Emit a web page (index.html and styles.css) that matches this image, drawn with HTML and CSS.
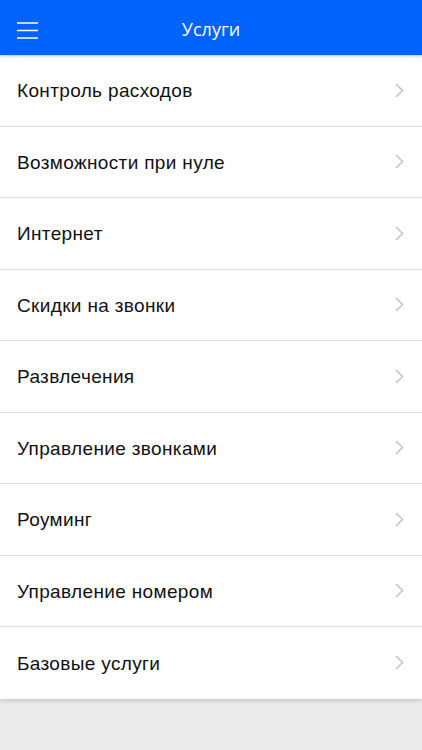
FILE: index.html
```html
<!DOCTYPE html>
<html lang="ru">
<head>
<meta charset="utf-8">
<title>Услуги</title>
<link rel="stylesheet" href="styles.css">
</head>
<body>
<header class="topbar">
  <button class="menu-btn" aria-label="Меню">
    <svg width="22" height="17" viewBox="0 0 22 17"><g stroke="#fff" stroke-width="1.5"><line x1="0" y1="1" x2="21" y2="1"/><line x1="0" y1="8.5" x2="21" y2="8.5"/><line x1="0" y1="16" x2="21" y2="16"/></g></svg>
  </button>
  <h1 class="title">Услуги</h1>
</header>
<ul class="list">
  <li class="item"><span>Контроль расходов</span><svg class="chev" width="9" height="15" viewBox="0 0 9 15"><path d="M1 1l6.5 6.5L1 14" fill="none" stroke="#c4c4c8" stroke-width="1.6"/></svg></li>
  <li class="item"><span>Возможности при нуле</span><svg class="chev" width="9" height="15" viewBox="0 0 9 15"><path d="M1 1l6.5 6.5L1 14" fill="none" stroke="#c4c4c8" stroke-width="1.6"/></svg></li>
  <li class="item"><span>Интернет</span><svg class="chev" width="9" height="15" viewBox="0 0 9 15"><path d="M1 1l6.5 6.5L1 14" fill="none" stroke="#c4c4c8" stroke-width="1.6"/></svg></li>
  <li class="item"><span>Скидки на звонки</span><svg class="chev" width="9" height="15" viewBox="0 0 9 15"><path d="M1 1l6.5 6.5L1 14" fill="none" stroke="#c4c4c8" stroke-width="1.6"/></svg></li>
  <li class="item"><span>Развлечения</span><svg class="chev" width="9" height="15" viewBox="0 0 9 15"><path d="M1 1l6.5 6.5L1 14" fill="none" stroke="#c4c4c8" stroke-width="1.6"/></svg></li>
  <li class="item"><span>Управление звонками</span><svg class="chev" width="9" height="15" viewBox="0 0 9 15"><path d="M1 1l6.5 6.5L1 14" fill="none" stroke="#c4c4c8" stroke-width="1.6"/></svg></li>
  <li class="item"><span>Роуминг</span><svg class="chev" width="9" height="15" viewBox="0 0 9 15"><path d="M1 1l6.5 6.5L1 14" fill="none" stroke="#c4c4c8" stroke-width="1.6"/></svg></li>
  <li class="item"><span>Управление номером</span><svg class="chev" width="9" height="15" viewBox="0 0 9 15"><path d="M1 1l6.5 6.5L1 14" fill="none" stroke="#c4c4c8" stroke-width="1.6"/></svg></li>
  <li class="item"><span>Базовые услуги</span><svg class="chev" width="9" height="15" viewBox="0 0 9 15"><path d="M1 1l6.5 6.5L1 14" fill="none" stroke="#c4c4c8" stroke-width="1.6"/></svg></li>
</ul>
</body>
</html>
```
FILE: styles.css
```css
html, body {
  margin: 0;
  padding: 0;
  height: 100%;
}
body {
  background: #ebebeb;
  font-family: "Liberation Sans", Arial, sans-serif;
  color: #111;
}
.topbar {
  position: relative;
  z-index: 2;
  height: 55px;
  background: #0063fc;
  display: flex;
  align-items: center;
  justify-content: center;
  box-shadow: 0 1px 3px rgba(0,0,0,0.25);
}
.menu-btn {
  position: absolute;
  left: 17px;
  top: 22px;
  padding: 0;
  margin: 0;
  border: 0;
  background: none;
  display: flex;
}
.title {
  margin: 0;
  font-family: "Open Sans", sans-serif;
  font-weight: 400;
  font-size: 18px;
  color: #fff;
  padding-top: 2px;
}
.list {
  list-style: none;
  margin: 0;
  padding: 0;
  background: #fff;
  box-shadow: 0 2px 4px rgba(0,0,0,0.15);
}
.item {
  box-sizing: border-box;
  height: 71.5px;
  border-bottom: 1px solid #dedede;
  display: flex;
  align-items: center;
  justify-content: space-between;
  padding: 2px 17px 0 17px;
  font-size: 19px;
  letter-spacing: 0.35px;
  color: #111;
}
.item:last-child {
  border-bottom: 0;
}
.chev {
  margin-right: 1px;
  margin-top: -2px;
}
```
